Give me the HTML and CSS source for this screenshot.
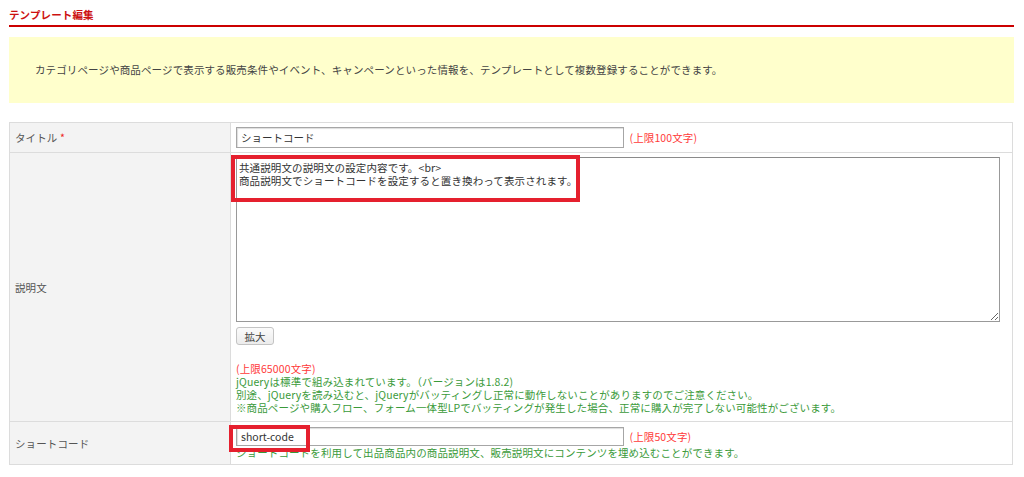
FILE: index.html
```html
<!DOCTYPE html>
<html lang="ja">
<head>
<meta charset="utf-8">
<title>テンプレート編集</title>
<link rel="stylesheet" href="styles.css">
</head>
<body>
<div class="page">
  <h1 class="page-title">テンプレート編集</h1>
  <div class="notice">カテゴリページや商品ページで表示する販売条件やイベント、キャンペーンといった情報を、テンプレートとして複数登録することができます。</div>
  <table class="form-table">
    <tr class="row-title">
      <th>タイトル <span class="req">*</span></th>
      <td><input class="text-input" type="text" value="ショートコード"> <span class="limit">(上限100文字)</span></td>
    </tr>
    <tr class="row-desc">
      <th>説明文</th>
      <td>
        <textarea class="desc-area">共通説明文の説明文の設定内容です。&lt;br&gt;
商品説明文でショートコードを設定すると置き換わって表示されます。</textarea>
        <button class="expand-btn" type="button">拡大</button>
        <div class="notes">
          <div class="limit">(上限65000文字)</div>
          <div class="note">jQueryは標準で組み込まれています。（バージョンは1.8.2)</div>
          <div class="note">別途、jQueryを読み込むと、jQueryがバッティングし正常に動作しないことがありますのでご注意ください。</div>
          <div class="note">※商品ページや購入フロー、フォーム一体型LPでバッティングが発生した場合、正常に購入が完了しない可能性がございます。</div>
        </div>
      </td>
    </tr>
    <tr class="row-code">
      <th>ショートコード</th>
      <td>
        <input class="text-input short" type="text" value="short-code"> <span class="limit">(上限50文字)</span>
        <div class="note">ショートコードを利用して出品商品内の商品説明文、販売説明文にコンテンツを埋め込むことができます。</div>
      </td>
    </tr>
  </table>
</div>
<div class="highlight hl-desc"></div>
<div class="highlight hl-code"></div>
</body>
</html>
```

FILE: styles.css
```css
html, body {
  margin: 0;
  padding: 0;
  background: #fff;
}
body {
  position: relative;
  font-family: "Noto Sans CJK JP", "Noto Sans", sans-serif;
  font-size: 10.5px;
  letter-spacing: 0.12px;
  color: #333;
}
.page {
  width: 1005px;
  padding-left: 9px;
}
.page-title {
  margin: 8px 0 0;
  font-size: 10.5px;
  line-height: 14px;
  font-weight: bold;
  color: #cc1111;
  padding-bottom: 3px;
  border-bottom: 2px solid #cc0000;
}
.notice {
  margin-top: 10px;
  height: 66px;
  box-sizing: border-box;
  padding: 26px 26px 0;
  line-height: 14px;
  background: #ffffcc;
  color: #444;
}
.form-table {
  margin-top: 19px;
  width: 1004px;
  border-collapse: collapse;
  border: 1px solid #dcdcdc;
}
.form-table th,
.form-table td {
  border: 1px solid #dcdcdc;
  font-size: 10.5px;
  line-height: 13px;
}
.form-table th {
  width: 210px;
  background: #f3f3f3;
  color: #555;
  font-weight: normal;
  text-align: left;
  padding: 0 5px;
  vertical-align: middle;
}
.form-table td {
  padding: 4px 5px;
  vertical-align: top;
}
.req {
  color: #ee2222;
}
.text-input {
  box-sizing: border-box;
  width: 388px;
  height: 21px;
  margin: 0 3px 0 0;
  padding: 0 4px;
  border: 1px solid #a6a6a6;
  box-shadow: inset 1px 1px 1px #ddd;
  font-family: inherit;
  font-size: 10.5px;
  color: #333;
  vertical-align: middle;
}
.text-input.short {
  height: 19px;
}
.limit {
  color: #ff3a3a;
  vertical-align: middle;
}
.row-desc td {
  padding-top: 4px;
  padding-bottom: 7px;
}
.desc-area {
  display: block;
  box-sizing: border-box;
  width: 764px;
  height: 165px;
  margin: 0;
  padding: 3px 2px 1px;
  border: 1px solid #999;
  border-top-color: #8a8a8a;
  font-family: inherit;
  font-size: 10.5px;
  line-height: 13px;
  letter-spacing: 0.12px;
  color: #333;
  resize: both;
}
.expand-btn {
  display: block;
  margin-top: 5px;
  width: 38px;
  height: 18px;
  padding: 0;
  border: 1px solid #c4c4c4;
  border-radius: 3px;
  background: linear-gradient(#fbfbfb, #ececec);
  font-family: inherit;
  font-size: 10.5px;
  color: #444;
}
.notes {
  margin-top: 17px;
}
.notes .limit {
  display: block;
}
.note {
  color: #3a9a3a;
}
.row-code td {
  padding-top: 5px;
  padding-bottom: 5px;
}
.row-code .note {
  line-height: 13px;
}
.highlight {
  position: absolute;
  box-sizing: border-box;
  border: 4px solid #e5202e;
}
.hl-desc {
  left: 231px;
  top: 155px;
  width: 349px;
  height: 47px;
}
.hl-code {
  left: 229px;
  top: 425px;
  width: 81px;
  height: 27px;
}
```
